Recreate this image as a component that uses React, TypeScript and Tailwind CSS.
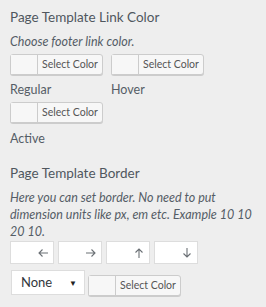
import { useState } from "react";

const font = { fontFamily: 'Lato, "Liberation Sans", sans-serif' };

const ColorButton = ({ className = "" }: { className?: string }) => (
  <button
    type="button"
    className={`flex h-[21px] w-[93px] shrink-0 items-stretch rounded-[3px] border border-[#cccccc] bg-[#f7f7f7] p-0 shadow-[0_1px_0_#cccccc] ${className}`}
  >
    <span className="w-[27px] border-r border-[#cccccc] bg-[#f7f7f7]" />
    <span className="flex flex-1 items-center justify-center text-[10.5px] text-[#555555]">
      Select Color
    </span>
  </button>
);

type Dir = "left" | "right" | "up" | "down";

const Arrow = ({ dir }: { dir: Dir }) => {
  const rot = { left: 0, right: 180, up: 90, down: 270 }[dir];
  return (
    <svg
      width="10"
      height="10"
      viewBox="0 0 10 10"
      style={{ transform: `rotate(${rot}deg)` }}
    >
      <path
        d="M1 5h9M4.5 1.5L1 5l3.5 3.5"
        fill="none"
        stroke="#6b7075"
        strokeWidth="1.1"
      />
    </svg>
  );
};

const dirs: Dir[] = ["left", "right", "up", "down"];

export default function App() {
  const [style, setStyle] = useState("None");

  return (
    <div
      className="h-[307px] w-[266px] overflow-hidden bg-[#eeeeee] px-[10px] pt-[8px] text-[#555d66]"
      style={font}
    >
      {/* Link colour */}
      <h3 className="text-[13.5px] leading-[18px] font-normal text-[#50575e]">
        Page Template Link Color
      </h3>
      <p className="mt-[8px] text-[12.5px] leading-[16px] italic">
        Choose footer link color.
      </p>
      <div className="mt-[4px] grid grid-cols-[101px_101px]">
        <div>
          <ColorButton />
          <p className="mt-[7px] text-[12.5px] leading-[16px]">Regular</p>
        </div>
        <div>
          <ColorButton />
          <p className="mt-[7px] text-[12.5px] leading-[16px]">Hover</p>
        </div>
        <div className="mt-[4px]">
          <ColorButton />
          <p className="mt-[8px] text-[12.5px] leading-[16px]">Active</p>
        </div>
      </div>

      {/* Border */}
      <h3 className="mt-[17px] text-[13.5px] leading-[18px] font-normal text-[#50575e]">
        Page Template Border
      </h3>
      <p className="mt-[7px] text-[12.5px] leading-[17px] italic">
        Here you can set border. No need to put dimension units like px, em
        etc. Example 10 10 20 10.
      </p>
      <div className="mt-[1px] flex gap-[4px]">
        {dirs.map((d) => (
          <div
            key={d}
            className="flex h-[23px] w-[44px] items-center justify-end border border-[#dddddd] bg-white pr-[5px]"
          >
            <Arrow dir={d} />
          </div>
        ))}
      </div>
      <div className="mt-[6px] flex items-start gap-[3px]">
        <div className="ml-[1px] flex h-[25px] w-[74px] items-center justify-between border border-[#dddddd] bg-white pl-[9px] pr-[7px] text-[13px] text-[#32373c]">
          <span>{style}</span>
          <span
            className="text-[8px] text-[#222222]"
            onClick={() => setStyle("None")}
          >
            ▼
          </span>
        </div>
        <ColorButton className="mt-[5px] w-[91px]" />
      </div>
    </div>
  );
}
